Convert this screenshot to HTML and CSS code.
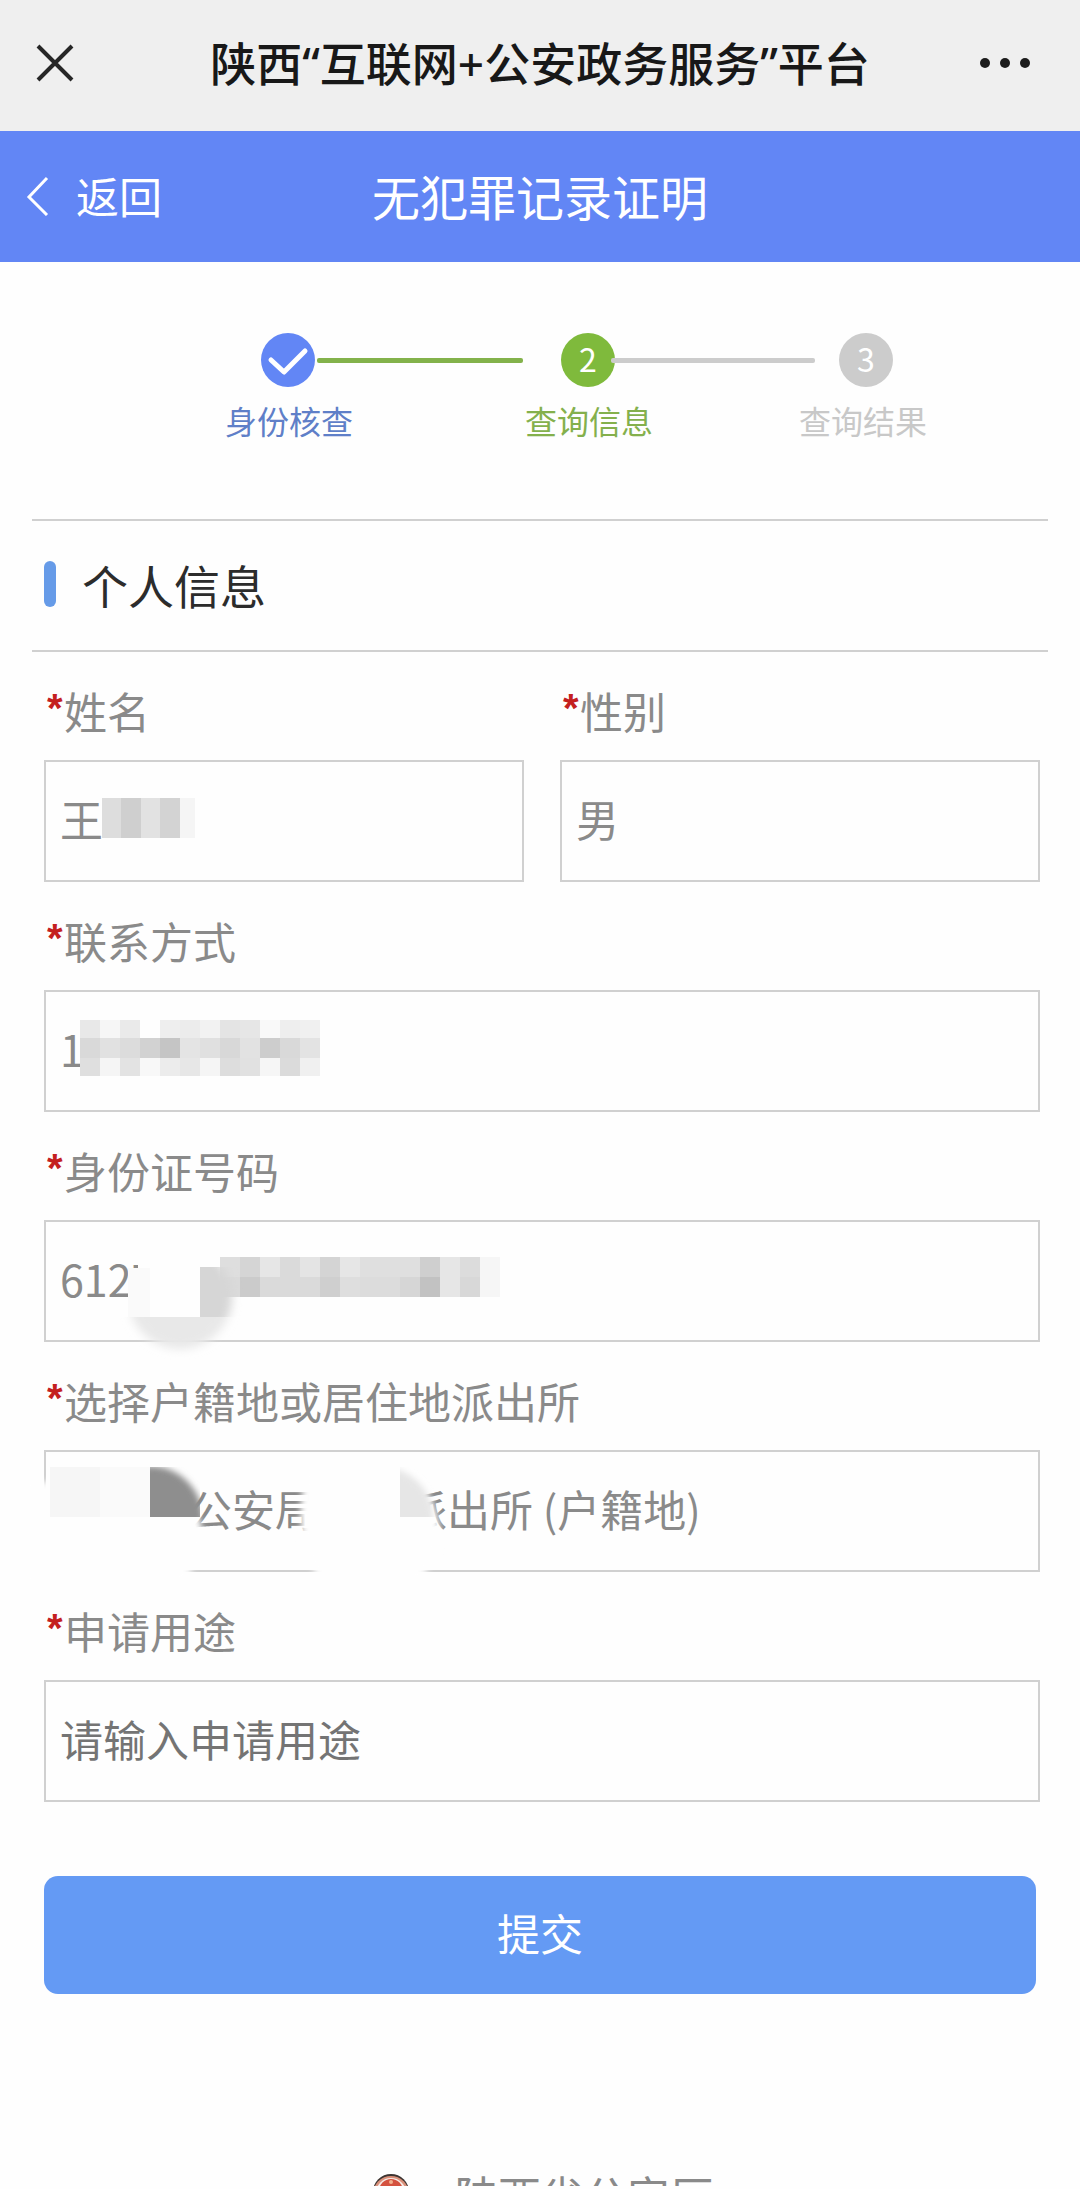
FILE: index.html
```html
<!DOCTYPE html>
<html lang="zh-CN">
<head>
<meta charset="utf-8">
<meta name="viewport" content="width=device-width, initial-scale=1">
<title>无犯罪记录证明</title>
<link rel="stylesheet" href="styles.css">
</head>
<body>
<header class="topbar">
  <button class="icon-btn" type="button" aria-label="关闭">
    <svg width="38" height="38" viewBox="0 0 38 38"><path d="M2 2 36 36M36 2 2 36" fill="none" stroke="#262626" stroke-width="4"/></svg>
  </button>
  <h1 class="topbar-title">陕西“互联网+公安政务服务”平台</h1>
  <button class="icon-btn icon-btn--end" type="button" aria-label="更多">
    <svg width="50" height="12" viewBox="0 0 50 12" fill="#1c1c1c"><circle cx="5" cy="6" r="5"/><circle cx="25" cy="6" r="5"/><circle cx="45" cy="6" r="5"/></svg>
  </button>
</header>

<nav class="navbar">
  <a class="back" href="#">
    <svg width="24" height="42" viewBox="0 0 24 42"><path d="M21 4 3 23 21 41" fill="none" stroke="#fff" stroke-width="3"/></svg>
    <span>返回</span>
  </a>
  <h2 class="navbar-title">无犯罪记录证明</h2>
</nav>

<main>
  <ol class="steps">
    <li class="step step--done">
      <div class="marker">
        <svg class="dot" viewBox="0 0 54 54"><path d="M10 27 23 39 44 18" fill="none" stroke="#fff" stroke-width="5" stroke-linecap="round" stroke-linejoin="round"/></svg>
        <span class="line"></span>
      </div>
      <span class="step-label">身份核查</span>
    </li>
    <li class="step step--active">
      <div class="marker"><span class="dot">2</span><span class="line"></span></div>
      <span class="step-label">查询信息</span>
    </li>
    <li class="step step--todo">
      <div class="marker"><span class="dot">3</span></div>
      <span class="step-label">查询结果</span>
    </li>
  </ol>

  <h3 class="section-title">个人信息</h3>

  <form class="form">
    <div class="row">
      <div class="field">
        <label for="name"><span class="req">*</span>姓名</label>
        <div class="box">
          <input id="name" type="text" value="王">
          <svg class="mask" width="480" height="122" shape-rendering="crispEdges">
            <path fill="#dddddd" d="M58 38h19v40h-19z"/><path fill="#cfcfcf" d="M77 38h20v40h-20z"/><path fill="#e2e2e2" d="M97 38h19v40h-19z"/><path fill="#d3d3d3" d="M116 38h20v40h-20z"/><path fill="#f5f5f5" d="M136 38h15v40h-15z"/>
          </svg>
        </div>
      </div>
      <div class="field">
        <label for="gender"><span class="req">*</span>性别</label>
        <div class="box"><input id="gender" type="text" value="男"></div>
      </div>
    </div>

    <div class="field">
      <label for="phone"><span class="req">*</span>联系方式</label>
      <div class="box">
        <input id="phone" type="text" value="1">
        <svg class="mask" width="480" height="122" shape-rendering="crispEdges">
          <g>
            <path fill="#e8e8e8" d="M36 30h20v18h-20z"/><path fill="#f6f6f6" d="M56 30h20v18h-20z"/><path fill="#eaeaea" d="M76 30h20v18h-20z"/><path fill="#fefefe" d="M96 30h20v18h-20z"/><path fill="#eeeeee" d="M116 30h20v18h-20z"/><path fill="#ececec" d="M136 30h20v18h-20z"/><path fill="#f2f2f2" d="M156 30h20v18h-20z"/><path fill="#e4e4e4" d="M176 30h20v18h-20z"/><path fill="#e6e6e6" d="M196 30h20v18h-20z"/><path fill="#f9f9f9" d="M216 30h20v18h-20z"/><path fill="#eeeeee" d="M236 30h20v18h-20z"/><path fill="#f0f0f0" d="M256 30h20v18h-20z"/>
          </g>
          <g>
            <path fill="#d9d9d9" d="M36 48h20v20h-20z"/><path fill="#e1e1e1" d="M56 48h20v20h-20z"/><path fill="#dcdcdc" d="M76 48h20v20h-20z"/><path fill="#d2d2d2" d="M96 48h20v20h-20z"/><path fill="#c5c5c5" d="M116 48h20v20h-20z"/><path fill="#e4e4e4" d="M136 48h20v20h-20z"/><path fill="#e0e0e0" d="M156 48h20v20h-20z"/><path fill="#d8d8d8" d="M176 48h20v20h-20z"/><path fill="#e2e2e2" d="M196 48h20v20h-20z"/><path fill="#cdcdcd" d="M216 48h20v20h-20z"/><path fill="#d9d9d9" d="M236 48h20v20h-20z"/><path fill="#e3e3e3" d="M256 48h20v20h-20z"/>
          </g>
          <g>
            <path fill="#dfdfdf" d="M36 68h20v18h-20z"/><path fill="#f5f5f5" d="M56 68h20v18h-20z"/><path fill="#e3e3e3" d="M76 68h20v18h-20z"/><path fill="#f8f8f8" d="M96 68h20v18h-20z"/><path fill="#ececec" d="M116 68h20v18h-20z"/><path fill="#e7e7e7" d="M136 68h20v18h-20z"/><path fill="#f5f5f5" d="M156 68h20v18h-20z"/><path fill="#dddddd" d="M176 68h20v18h-20z"/><path fill="#e1e1e1" d="M196 68h20v18h-20z"/><path fill="#f6f6f6" d="M216 68h20v18h-20z"/><path fill="#dbdbdb" d="M236 68h20v18h-20z"/><path fill="#f0f0f0" d="M256 68h20v18h-20z"/>
          </g>
        </svg>
      </div>
    </div>

    <div class="field">
      <label for="idno"><span class="req">*</span>身份证号码</label>
      <div class="box">
        <input id="idno" type="text" value="6127">
        <svg class="mask" width="480" height="160">
          <defs>
            <filter id="soft" x="-20%" y="-20%" width="140%" height="140%"><feGaussianBlur stdDeviation="5"/></filter>
            <clipPath id="idRight"><path d="M156 47h50v50h-50z"/></clipPath>
            <clipPath id="idBelow"><path d="M70 97h140v60H70z"/></clipPath>
          </defs>
          <path fill="#fefefe" d="M94 36h62v61H94z"/>
          <path fill="#fafafa" d="M84 48h22v49H84z"/>
          <g shape-rendering="crispEdges">
            <path fill="#dedede" d="M176 37h20v20h-20z"/><path fill="#d5d5d5" d="M196 37h20v20h-20z"/><path fill="#e6e6e6" d="M216 37h20v20h-20z"/><path fill="#dadada" d="M236 37h20v20h-20z"/><path fill="#e4e4e4" d="M256 37h20v20h-20z"/><path fill="#d4d4d4" d="M276 37h20v20h-20z"/><path fill="#e6e6e6" d="M296 37h20v20h-20z"/><path fill="#dfdfdf" d="M316 37h60v20h-60z"/><path fill="#cfcfcf" d="M376 37h20v20h-20z"/><path fill="#e6e6e6" d="M396 37h20v20h-20z"/><path fill="#dcdcdc" d="M416 37h20v20h-20z"/><path fill="#f6f6f6" d="M436 37h20v40h-20z"/>
            <path fill="#dadada" d="M176 57h20v20h-20z"/><path fill="#cbcbcb" d="M196 57h20v20h-20z"/><path fill="#dadada" d="M216 57h60v20h-60z"/><path fill="#cfcfcf" d="M276 57h20v20h-20z"/><path fill="#dedede" d="M296 57h20v20h-20z"/><path fill="#dcdcdc" d="M316 57h40v20h-40z"/><path fill="#d6d6d6" d="M356 57h20v20h-20z"/><path fill="#c2c2c2" d="M376 57h20v20h-20z"/><path fill="#e6e6e6" d="M396 57h20v20h-20z"/><path fill="#d8d8d8" d="M416 57h20v20h-20z"/>
          </g>
          <g clip-path="url(#idRight)"><circle cx="136" cy="77" r="52" fill="#d6d6d6" filter="url(#soft)"/></g>
          <g clip-path="url(#idBelow)"><circle cx="136" cy="77" r="52" fill="#e8e8e8" filter="url(#soft)"/></g>
        </svg>
      </div>
    </div>

    <div class="field">
      <label for="station"><span class="req">*</span>选择户籍地或居住地派出所</label>
      <div class="box">
        <input id="station" type="text" value="　　　公安局　　派出所 (户籍地)">
        <svg class="mask" width="480" height="140">
          <defs>
            <filter id="edge" x="-20%" y="-20%" width="140%" height="140%"><feGaussianBlur stdDeviation="3"/></filter>
            <clipPath id="stA"><path d="M106 17h50v50h-50z"/></clipPath>
            <clipPath id="stB"><path d="M356 17h50v50h-50z"/></clipPath>
          </defs>
          <g fill="#fefefe" filter="url(#edge)">
            <path d="M-16 32H100C150 35 162 76 158 92Q154 112 140 132H-16z"/>
            <path d="M262 26H362C382 32 396 66 396 84Q392 112 374 132H276Q246 80 262 26z"/>
          </g>
          <path fill="#f6f6f6" d="M6 17h50v50H6z"/><path fill="#fafafa" d="M56 17h50v50H56z"/>
          <g clip-path="url(#stA)"><circle cx="106" cy="69" r="53" fill="#8e8e8e" filter="url(#edge)"/></g>
          <g clip-path="url(#stB)"><circle cx="338" cy="68" r="51" fill="#e6e6e6" filter="url(#edge)"/></g>
        </svg>
      </div>
    </div>

    <div class="field">
      <label for="purpose"><span class="req">*</span>申请用途</label>
      <div class="box"><input id="purpose" type="text" placeholder="请输入申请用途"></div>
    </div>

    <button class="submit" type="submit">提交</button>
  </form>
</main>

<footer class="footer">
  <svg width="36" height="40" viewBox="0 0 36 40"><circle cx="18" cy="18" r="18" fill="#3c3431"/><circle cx="18" cy="20" r="18" fill="#d9907a"/><circle cx="18" cy="19" r="15" fill="#f7ebe6"/><circle cx="18" cy="17" r="12" fill="#d4523f"/><circle cx="18" cy="8" r="2" fill="#f3b08c"/></svg>
  <span>陕西省公安厅</span>
</footer>
</body>
</html>
```
FILE: styles.css
```css
* { box-sizing: border-box; }

body {
  margin: 0;
  background: #fefefe;
  color: #8a8a8a;
  font: 400 43px/64px "Noto Sans CJK SC", sans-serif;
}

h1, h2, h3 { margin: 0; font-weight: 400; }

button, input { font: inherit; }

.topbar,
.navbar {
  display: grid;
  grid-template-columns: 1fr auto 1fr;
  align-items: center;
  height: 131px;
}

.topbar { background: #efefef; padding: 0 36px 6px; }

.topbar-title {
  color: #181818;
  font: 500 46px/64px "Noto Sans", "Noto Sans CJK SC", sans-serif;
}

.icon-btn {
  display: flex;
  justify-self: start;
  padding: 0;
  border: 0;
  background: none;
}

.icon-btn--end { justify-self: end; margin-right: 14px; }

.navbar { background: #6286f5; color: #fff; padding: 0 26px 4px; }

.navbar-title { font-size: 48px; }

.back {
  display: flex;
  align-items: center;
  gap: 26px;
  color: inherit;
  text-decoration: none;
}

.steps {
  display: flex;
  margin: 0;
  padding: 71px 153px 79px 225px;
  list-style: none;
  font-size: 32px;
  line-height: 40px;
}

.step--done { flex: 300; color: #5f7fc8; --tone: #6286f5; --rail: #83b24b; }
.step--active { flex: 274; color: #84b04c; --tone: #7fba3c; --rail: #cccccc; }
.step--todo { flex: 0 0 128px; color: #c8c8c8; --tone: #cccccc; }

.marker {
  display: flex;
  align-items: center;
  padding-left: 36px;
  margin-bottom: 13px;
}

.dot {
  flex: none;
  width: 54px;
  height: 54px;
  border-radius: 50%;
  background: var(--tone);
  color: #fff;
  line-height: 50px;
  text-align: center;
}

.line {
  flex: 1;
  height: 5px;
  margin: 0 2px;
  border-radius: 2px;
  background: var(--rail);
}

.step--active .line { margin: 0 -16px 0 -4px; }
.step--todo .marker { padding-left: 40px; }

.step-label { display: block; white-space: nowrap; }

.section-title {
  display: flex;
  align-items: center;
  gap: 26px;
  margin: 0 32px;
  padding: 31px 12px 34px;
  border: solid #d0d0d0;
  border-width: 2px 0;
  color: #2c2c2c;
  font-size: 46px;
}

.section-title::before {
  width: 12px;
  height: 46px;
  border-radius: 6px;
  background: #669be8;
  content: "";
}

.form { padding: 0 40px 0 44px; }

.row {
  display: grid;
  grid-template-columns: 1fr 1fr;
  gap: 36px;
}

.field label { display: flex; padding: 26px 0 18px 3px; }

.req {
  width: 17px;
  color: #c4201f;
  font: 700 40px/60px "Liberation Sans", sans-serif;
}

.box { position: relative; }

.box input {
  display: block;
  width: 100%;
  height: 122px;
  padding: 0 14px 6px;
  border: 2px solid #d0d0d0;
  border-radius: 0;
  outline: 0;
  background: transparent;
  color: #8a8a8a;
}

.box input::placeholder { color: #747474; opacity: 1; }

/* Privacy mosaic laid over part of a field's value */
.mask {
  position: absolute;
  top: 0;
  left: 0;
  overflow: visible;
  pointer-events: none;
}

.submit {
  display: block;
  width: calc(100% - 4px);
  height: 118px;
  margin-top: 74px;
  padding: 0 0 6px;
  border: 0;
  border-radius: 14px;
  background: #649af4;
  color: #fff;
}

/* Only the upper edge of the signature line shows at the end of the page */
.footer {
  display: flex;
  align-items: flex-start;
  justify-content: center;
  gap: 46px;
  max-height: 12px;
  margin-top: 180px;
  padding-left: 6px;
  overflow: hidden;
  line-height: 40px;
}
```
